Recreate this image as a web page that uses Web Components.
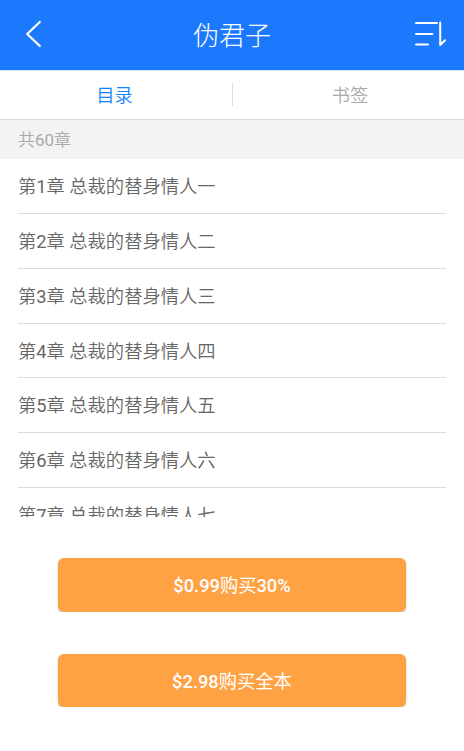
<!DOCTYPE html>
<html lang="zh-CN">
<head>
<meta charset="utf-8">
<title>伪君子</title>
<style>
html,body{margin:0;height:100%;background:#fff;overflow:hidden}
body{font-family:Roboto,"Noto Sans CJK SC",sans-serif;font-size:18.29px;color:#666}
</style>
</head>
<body>
<chapter-page></chapter-page>
<script>
const define = (name, html) => customElements.define(name, class extends HTMLElement {
  constructor() {
    super();
    const t = document.createElement('template');
    t.innerHTML = html;
    this.attachShadow({mode: 'open'}).append(t.content.cloneNode(true));
  }
});

define('app-header', `
<style>
:host{display:grid;grid-template-columns:64px 1fr 64px;align-items:start;background:#1c79fe;color:#fff;border-bottom:1px solid #d2e4ff;box-sizing:border-box;height:71px}
h1{margin:0;text-align:center;font-size:26px;font-weight:300;line-height:70px;padding-top:1px}
svg{display:block;width:64px;height:70px;fill:none;stroke:#fff;stroke-linecap:round;stroke-linejoin:round}
</style>
<svg viewBox="0 0 64 70" stroke-width="2.2"><path d="M39.8 22L27.2 34L39.8 46"/></svg>
<h1><slot></slot></h1>
<svg viewBox="0 0 64 70" stroke-width="2"><path d="M16 23H37M16 34H32.3M16 44.6H28M40.2 22.5V45L45 40.2"/></svg>`);

define('tab-item', `
<style>
:host{display:block;text-align:center;color:#aaa;line-height:48px;padding-top:1px;font-weight:350}
:host([active]){color:#1283fe}
</style><slot></slot>`);

define('tab-bar', `
<style>
:host{display:grid;grid-template-columns:229px 6px 1fr;align-items:start;height:49px;box-sizing:border-box;border-bottom:1px solid #dcdcdc}
i{width:1px;height:23px;background:#ddd;margin:12px 0 0 3px}
::slotted([slot=right]){padding-left:1px}
</style><slot name="left"></slot><i></i><slot name="right"></slot>`);

define('chapter-count', `
<style>
:host{display:block;height:39px;box-sizing:border-box;background:#f3f3f3;padding-left:18px;line-height:40px;font-size:17px;font-weight:350;color:#aaa}
::slotted(span){font-weight:400}
</style><slot></slot>`);

define('chapter-row', `
<style>
:host{display:block;height:54.85px;box-sizing:border-box;border-bottom:1px solid #dcdcdc;line-height:56.2px;white-space:nowrap;font-weight:350}
::slotted(span){font-weight:400}
</style><slot></slot>`);

define('chapter-list', `
<style>:host{display:block;height:358px;overflow:hidden;padding:0 18px}</style><slot></slot>`);

define('buy-button', `
<style>
:host{display:block;clip-path:inset(-2px -2px 0)}
button{display:block;width:100%;height:var(--h,53px);border:0;border-radius:6px;padding:1px 0 0;background:#ffa244;color:#fff;font:400 18.29px/54px Roboto,"Noto Sans CJK SC",sans-serif;box-shadow:0 1px 2px rgba(0,0,0,.25)}
::slotted(span){font-weight:500}
</style><button><slot></slot></button>`);

define('chapter-page', `
<style>
:host{display:block;height:751px;overflow:hidden}
section{display:flex;flex-direction:column;gap:42px;padding:41px 58px 0}
buy-button:first-child{--h:54px}
</style>
<app-header>伪君子</app-header>
<tab-bar><tab-item slot="left" active>目录</tab-item><tab-item slot="right">书签</tab-item></tab-bar>
<chapter-count>共<span>60</span>章</chapter-count>
<chapter-list>${[...'一二三四五六七'].map((n, i) => `<chapter-row>第<span>${i + 1}</span>章 总裁的替身情人${n}</chapter-row>`).join('')}</chapter-list>
<section><buy-button><span>$0.99</span>购买<span>30%</span></buy-button><buy-button><span>$2.98</span>购买全本</buy-button></section>`);
</script>
</body>
</html>
